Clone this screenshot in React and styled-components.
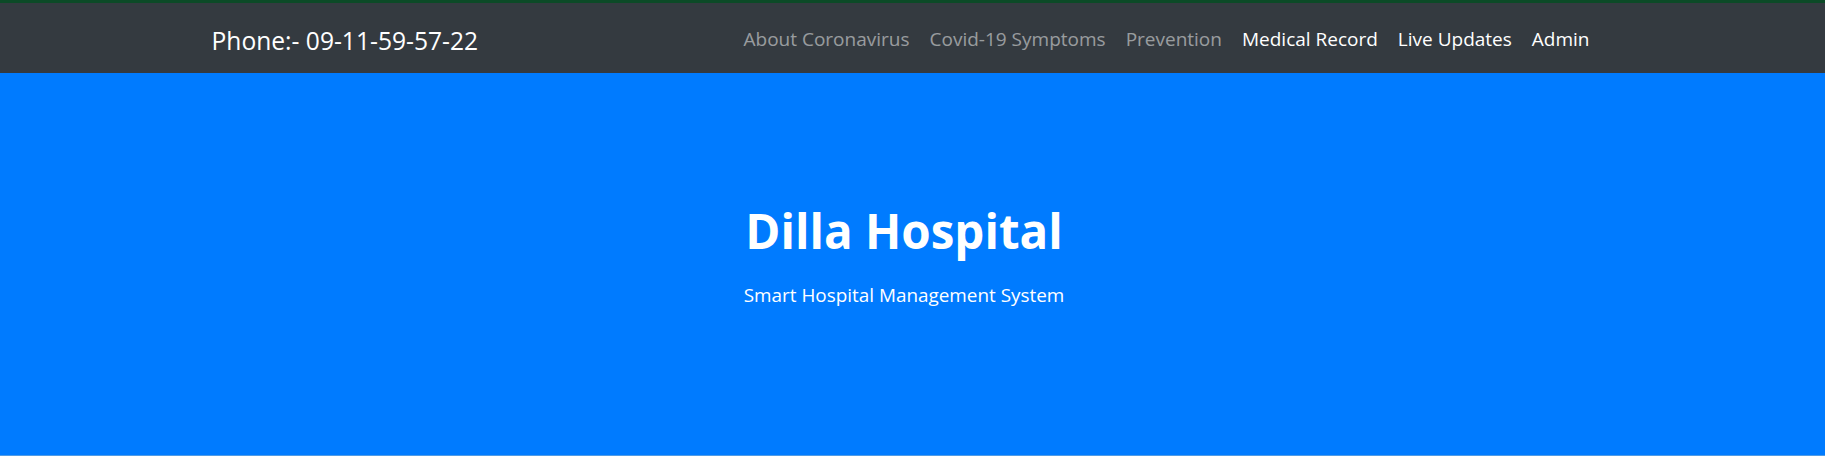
import React from "react";
import styled, { createGlobalStyle } from "styled-components";

const links = [
  { label: "About Coronavirus", active: false },
  { label: "Covid-19 Symptoms", active: false },
  { label: "Prevention", active: false },
  { label: "Medical Record", active: true },
  { label: "Live Updates", active: true },
  { label: "Admin", active: true },
];

const App = () => {
  return (
    <>
      <GlobalStyle />
      <Navbar>
        <Container>
          <Brand>Phone:- 09-11-59-57-22</Brand>
          <NavList>
            {links.map((link) => (
              <NavItem key={link.label}>
                <NavLink href="#" $active={link.active}>
                  {link.label}
                </NavLink>
              </NavItem>
            ))}
          </NavList>
        </Container>
      </Navbar>
      <Hero>
        <Title>Dilla Hospital</Title>
        <Lead>Smart Hospital Management System</Lead>
      </Hero>
    </>
  );
};

const GlobalStyle = createGlobalStyle`
  * {
    box-sizing: border-box;
  }
  body {
    margin: 0;
    font-family: "Open Sans", "Noto Sans", sans-serif;
    background-color: #fff;
    color: #212529;
  }
`;

const Navbar = styled.nav`
  height: 73px;
  padding-right: 17px;
  background-color: #343a40;
  border-top: 3px solid #0c4a27;
`;

const Container = styled.div`
  display: flex;
  align-items: center;
  justify-content: space-between;
  width: 1425px;
  height: 100%;
  margin: 0 auto;
  padding: 2px 17px 0 20px;
`;

const Brand = styled.span`
  padding-top: 2px;
  font-size: 24.6px;
  color: #fff;
  white-space: nowrap;
`;

const NavList = styled.ul`
  display: flex;
  margin: 0;
  padding: 0;
  list-style: none;
`;

const NavItem = styled.li`
  display: block;
`;

const NavLink = styled.a`
  display: block;
  padding: 10px 10px;
  font-size: 19px;
  text-decoration: none;
  color: ${(props) => (props.$active ? "#fff" : "rgba(255, 255, 255, 0.5)")};
`;

const Hero = styled.header`
  display: flex;
  flex-direction: column;
  align-items: center;
  justify-content: center;
  height: 383px;
  padding: 0 17px 16px 0;
  background-color: #007bff;
  border-bottom: 1px solid #4f9be6;
  color: #fff;
  text-align: center;
`;

const Title = styled.h1`
  margin: 0 0 22px;
  font-size: 47.5px;
  font-weight: 700;
  line-height: 1.2;
`;

const Lead = styled.p`
  margin: 0;
  font-size: 18.9px;
  line-height: 1.5;
`;

export default App;
